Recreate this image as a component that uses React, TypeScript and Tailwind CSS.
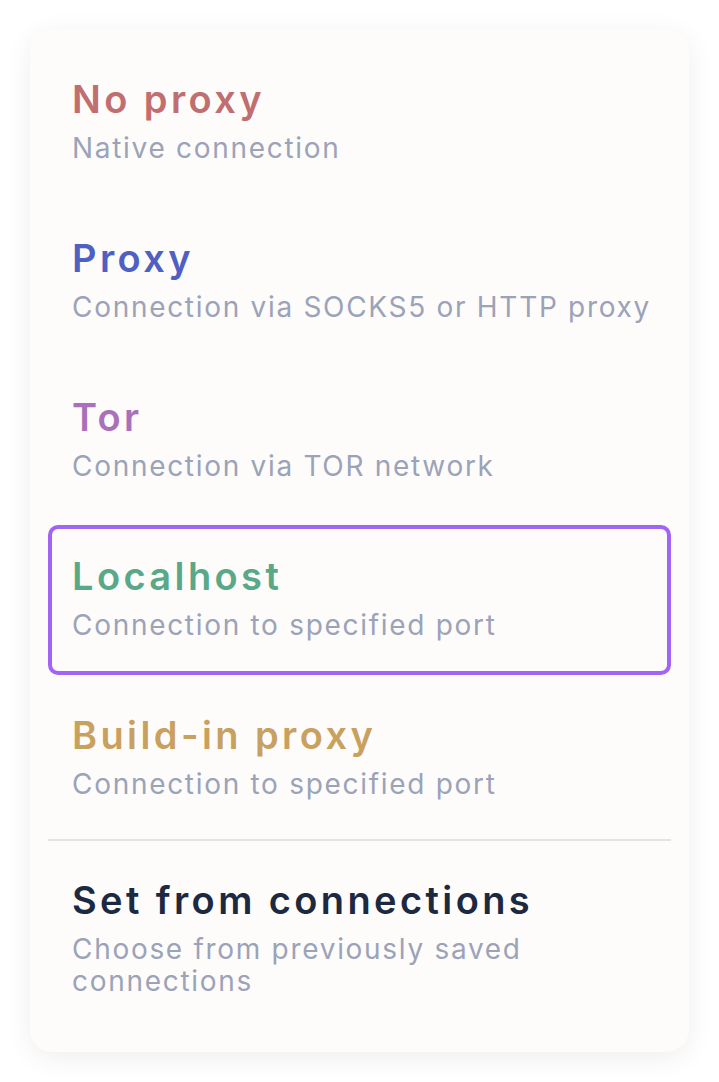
import React from "react";

type Mode = {
  id: string;
  title: string;
  hint: string;
  color: string;
};

const MODES: Mode[] = [
  { id: "none", title: "No proxy", hint: "Native connection", color: "text-[#c06e6f]" },
  { id: "proxy", title: "Proxy", hint: "Connection via SOCKS5 or HTTP proxy", color: "text-[#4f60c3]" },
  { id: "tor", title: "Tor", hint: "Connection via TOR network", color: "text-[#a971b9]" },
  { id: "local", title: "Localhost", hint: "Connection to specified port", color: "text-[#59a887]" },
  { id: "builtin", title: "Build-in proxy", hint: "Connection to specified port", color: "text-[#c9a15f]" },
];

function Option({
  title,
  hint,
  color,
  active,
}: {
  title: string;
  hint: string;
  color: string;
  active?: boolean;
}) {
  return (
    <button
      type="button"
      className={`w-full rounded-[10px] border-4 pl-5 pr-2 pt-[25px] pb-[30px] text-left ${
        active ? "border-[#a264f4]" : "border-transparent"
      }`}
    >
      <div className={`text-[38px] leading-[44px] font-semibold tracking-[3.4px] ${color}`}>
        {title}
      </div>
      <div className="mt-[11px] text-[28px] leading-[32px] tracking-[1.7px] text-[#9ba3b8]">
        {hint}
      </div>
    </button>
  );
}

export default function App() {
  return (
    <div
      className="min-h-screen bg-white pt-[29px] pl-[30px] pr-[30px]"
      style={{ fontFamily: "Inter, 'Noto Sans', sans-serif" }}
    >
      <div className="w-[659px] rounded-[22px] bg-[#fdfcfb] px-[18px] pt-[19px] pb-[21px] shadow-[0_6px_28px_rgba(0,0,0,0.07)]">
        <div className="flex flex-col gap-[9px]">
          {MODES.map((m) => (
            <Option
              key={m.id}
              title={m.title}
              hint={m.hint}
              color={m.color}
              active={m.id === "local"}
            />
          ))}
        </div>
        <div className="mt-[5px] mb-[8px] h-[2px] bg-[#e6e4e3]" />
        <Option
          title="Set from connections"
          hint="Choose from previously saved connections"
          color="text-[#1c2940]"
        />
      </div>
    </div>
  );
}
